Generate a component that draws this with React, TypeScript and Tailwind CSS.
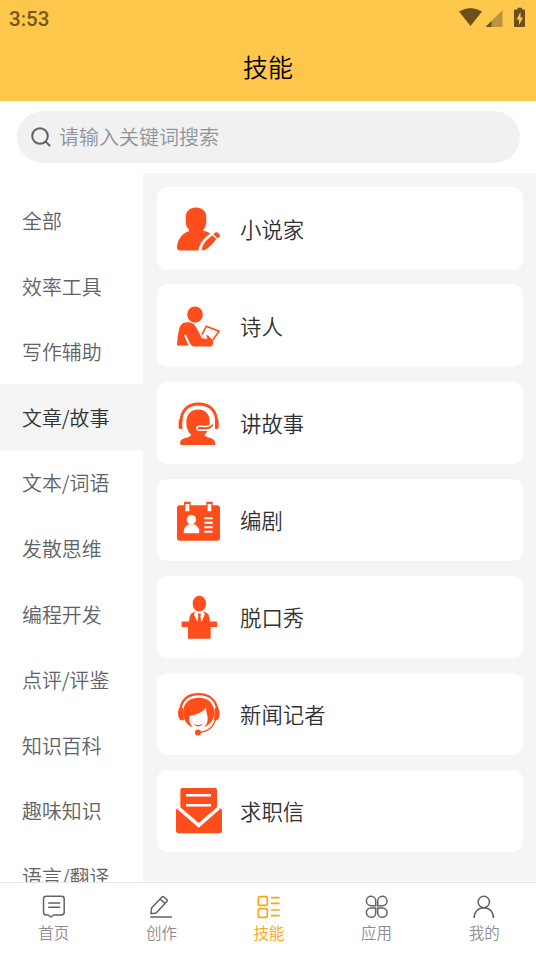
import type { ReactNode } from "react";

const ORANGE = "#ff4d1c";

function NovelistIcon() {
  return (
    <svg viewBox="75 73.5 144 144" className="size-12 shrink-0" fill={ORANGE}>
      <path d="M138 81c19 0 31 12 31 29v12c0 12-4 20-9 25v4c7 2 15 4 21 8-17 12-32 28-36 51H91c-7 0-11-4-10-11 2-24 17-42 36-47v-5c-6-6-10-13-10-25v-12c0-17 12-29 31-29z" />
      <path d="M155 210c1-14 7-24 18-34l14-12 12 12-13 15c-9 10-18 18-31 19zM190 161l5-4c4-3 8-1 11 2 4 3 5 7 3 10l-6 5z" />
    </svg>
  );
}

function PoetIcon() {
  return (
    <svg viewBox="75 64.3 144 144" className="size-12 shrink-0" fill={ORANGE}>
      <ellipse cx="135" cy="102" rx="23.5" ry="24.5" />
      <path d="M81 195c1-24 4-42 9-57 4-9 12-13 21-13 14 0 22 5 28 16l17 32c6 1 12 2 17 1l-5-9c4-3 8 0 10 4l11 11c2 7 0 17-8 18h-45c-8 0-12-3-15-8l-14-29-5 3 14 31z" />
      <path d="M156 162l13-25 38 15-18 26" fill="none" stroke={ORANGE} strokeWidth="5" />
      <path d="M178 174l10 7" stroke={ORANGE} strokeWidth="5" />
    </svg>
  );
}

function StorytellerIcon() {
  return (
    <svg viewBox="75 67.2 144 144" className="size-12 shrink-0" fill={ORANGE}>
      <path d="M93 134c1-33 21-52 53-52s53 19 54 52" fill="none" stroke={ORANGE} strokeWidth="9" />
      <path d="M89 128h8v29h-7c-3 0-4-2-4-5v-19c0-3 1-5 3-5zM195 128h8c2 0 3 2 3 5v19c0 3-2 5-5 5h-6z" />
      <path d="M144 99c22 0 35 14 35 34v10c-6 5-15 5-26 4-8-2-15 1-15 7 0 7 6 10 14 9h20c-2 5-5 8-9 12 4 5 10 7 18 9 10 3 15 9 15 18 0 2-2 3-4 3H95c-3 0-5-2-5-5 0-9 6-14 16-16 8-2 14-4 18-9-10-8-15-20-15-38 0-23 13-38 35-38z" />
      <path d="M187 142c-6 8-17 11-30 9h-7c-5 0-7 2-7 4s2 4 6 4h17c12-1 20-6 24-14z" />
    </svg>
  );
}

function ScreenwriterIcon() {
  return (
    <svg viewBox="75 64 144 144" className="size-12 shrink-0" fill={ORANGE}>
      <rect x="81" y="92" width="129" height="106" rx="8" />
      <path d="M102 81h20v29h-20zM169 81h19v29h-19z" />
      <g fill="#fff">
        <path d="M106 88h12v22h-12zM173 88h11v22h-11z" />
        <circle cx="124" cy="135" r="14" />
        <path d="M101 173c0-13 8-22 18-24h11c11 2 18 11 18 24 0 2-1 3-3 3h-41c-2 0-3-1-3-3z" />
        <path d="M163 128h25v6h-25zM163 141h25v6h-25zM163 155h25v6h-25zM163 168h25v6h-25z" />
      </g>
    </svg>
  );
}

function TalkShowIcon() {
  return (
    <svg viewBox="75 66.7 144 144" className="size-12 shrink-0" fill={ORANGE}>
      <ellipse cx="148" cy="98.500" rx="20" ry="23.500" />
      <path d="M134 123c-9 3-14 8-15 16l-2 13H95v17h19v35h68v-35h19v-17h-21l-2-13c-1-8-6-13-15-16z" />
      <path d="M135 122h26l3 9-9 22-7-10-6 10-10-22z" fill="#fff" />
      <path d="M145 128h6l2 5-2 3 2 11-5 9-5-9 2-11-2-3z" />
    </svg>
  );
}

function ReporterIcon() {
  return (
    <svg viewBox="75 69.5 144 144" className="size-12 shrink-0" fill={ORANGE}>
      <path d="M91 127c5-29 25-45 55-45s51 16 56 45" fill="none" stroke={ORANGE} strokeWidth="7" />
      <path d="M146 93c28 0 44 15 47 41 0 9-1 16-4 22-5 12-15 20-26 25 9-10 12-22 9-35-2-8-4-15-4-24-11 14-27 22-49 25-3 11 0 25 10 35-16-6-29-22-30-43 0-29 18-46 47-46z" />
      <path d="M94 122c-6 0-10 6-10 17 0 10 3 17 8 21h10l-3-36zM198 122c7 0 11 6 11 17 0 11-3 18-8 21h-9l2-36z" />
      <path d="M132 171c8 5 17 5 26 0-5 11-20 11-26 0z" />
      <path d="M198 153c-6 26-23 41-51 44" fill="none" stroke={ORANGE} strokeWidth="4" />
      <circle cx="144" cy="197" r="9" />
    </svg>
  );
}

function LetterIcon() {
  return (
    <svg viewBox="75 66.3 144 144" className="size-12 shrink-0" fill={ORANGE}>
      <path d="M91 75c0-4 2-6 6-6h98c4 0 6 2 6 6v52l-55 47-55-47z" />
      <path d="M85 130l61 57 62-57c5 0 8 3 8 8v59c0 5-3 8-8 8H86c-5 0-8-3-8-8v-59c0-5 2-8 7-8z" />
      <path d="M108 91h75M108 121h75" stroke="#fff" strokeWidth="8" />
      <path d="M85 130l61 53 61-53" fill="none" stroke="#fff" strokeWidth="8" />
    </svg>
  );
}

const categories = [
  "全部",
  "效率工具",
  "写作辅助",
  "文章/故事",
  "文本/词语",
  "发散思维",
  "编程开发",
  "点评/评鉴",
  "知识百科",
  "趣味知识",
  "语言/翻译",
];

const skills: { label: string; icon: ReactNode }[] = [
  { label: "小说家", icon: <NovelistIcon /> },
  { label: "诗人", icon: <PoetIcon /> },
  { label: "讲故事", icon: <StorytellerIcon /> },
  { label: "编剧", icon: <ScreenwriterIcon /> },
  { label: "脱口秀", icon: <TalkShowIcon /> },
  { label: "新闻记者", icon: <ReporterIcon /> },
  { label: "求职信", icon: <LetterIcon /> },
];

const navIcon = "size-6";

const tabs: { label: string; active?: boolean; icon: ReactNode }[] = [
  {
    label: "首页",
    icon: (
      <svg viewBox="125.4 105 72 72" className={navIcon} fill="none" stroke="#606266" strokeWidth="4.500" strokeLinejoin="round">
        <path d="M138 109h46q8 0 8 8v40q0 8-8 8h-24l-8 6-8-6h-6q-8 0-8-8v-40q0-8 8-8zM144 129h36M144 142h36" />
      </svg>
    ),
  },
  {
    label: "创作",
    icon: (
      <svg viewBox="448.200 105 72 72" className={navIcon} fill="none" stroke="#606266" strokeWidth="4.500" strokeLinejoin="round">
        <path d="M454 161l2-17 31-33q3-3 6 0l8 7q4 3 1 6l-32 35zM481 117l15 13M452 171h65" />
      </svg>
    ),
  },
  {
    label: "技能",
    active: true,
    icon: (
      <svg viewBox="771 105 72 72" className={navIcon} fill="none" stroke="#fba414" strokeWidth="5">
        <rect x="775" y="110" width="27" height="26" rx="5" />
        <rect x="775" y="146" width="27" height="26" rx="5" />
        <path d="M813 113h26M813 130h26M813 150h26M813 167h26" />
      </svg>
    ),
  },
  {
    label: "应用",
    icon: (
      <svg viewBox="295.800 165 72 72" className={navIcon} fill="none" stroke="#606266" strokeWidth="4.500">
        <path d="M328 197h-15a14 14 0 1 1 15-14zM334 197h15a14 14 0 1 0-15-14zM328 204h-15a14 14 0 1 0 15 14zM334 204h15a14 14 0 1 1-15 14z" />
      </svg>
    ),
  },
  {
    label: "我的",
    icon: (
      <svg viewBox="618.600 165 72 72" className={navIcon} fill="none" stroke="#606266" strokeWidth="4.500">
        <circle cx="654" cy="186" r="17" />
        <path d="M625 234c0-19 12-31 29-31s29 12 29 31" />
      </svg>
    ),
  },
];

export default function App() {
  return (
    <div className="flex h-[954px] w-[536px] flex-col overflow-hidden bg-white font-['Noto_Sans_CJK_SC',sans-serif] font-[350]">
      <header className="h-[101px] shrink-0 bg-[#ffc84c]">
        <div className="flex h-9 items-center justify-between pr-[10px] pl-[9px]">
          <span className="pt-[2px] font-['Roboto',sans-serif] text-[20.500px] font-medium text-[#755717]">3:53</span>
          <svg viewBox="0 0 67 22" className="h-[22px] w-[67px]" fill="#6b501b">
            <path d="M0 4.500Q11.500-2.500 23 4.500L11.500 19z" />
            <path d="M43.500 3v17h-17z" fill="#bd943b" />
            <path d="M32.500 14v6h-6z" />
            <path fillRule="evenodd" d="M58.500.800h4.500v1.700h2q1 0 1 1v15.500q0 1-1 1h-9q-1 0-1-1V3.500q0-1 1-1h2.500zM61.500 5l-4 7.500h2.500V18l4-7.500h-2.500z" />
          </svg>
        </div>
        <h1 className="text-center text-[25px] leading-[61px] font-[350] text-black">技能</h1>
      </header>

      <div className="h-[72px] shrink-0 pt-[10px] pr-4 pl-[17px]">
        <div className="flex h-[52px] items-center rounded-full bg-[#f1f1f1] pl-[14px]">
          <svg viewBox="0 0 20 20" className="size-5" fill="none" stroke="#606266" strokeWidth="2">
            <circle cx="9" cy="9" r="7.800" />
            <path d="M14.500 14.500l4.500 4.500" />
          </svg>
          <span className="ml-2 pb-px text-[20px] text-[#909399]">请输入关键词搜索</span>
        </div>
      </div>

      <main className="flex min-h-0 flex-1 bg-[#f5f5f5]">
        <aside className="w-[143px] shrink-0 overflow-hidden bg-white pt-[14.200px]">
          {categories.map((name) => (
            <div
              key={name}
              className={
                name === "文章/故事"
                  ? "flex h-[65.600px] items-center bg-[#f5f5f5] pt-[2px] pl-[22px] text-[19.900px] text-[#303133]"
                  : "flex h-[65.600px] items-center pt-[2px] pl-[22px] text-[19.900px] text-[#606266]"
              }
            >
              {name}
            </div>
          ))}
        </aside>
        <section className="flex flex-1 flex-col gap-[14.520px] overflow-hidden pt-[14.480px] pr-[13px] pl-[14px]">
          {skills.map((skill) => (
            <div key={skill.label} className="flex h-[82.500px] shrink-0 items-center rounded-[10px] bg-white pl-[18px]">
              {skill.icon}
              <span className="ml-[17px] text-[21.400px] text-[#303133]">{skill.label}</span>
            </div>
          ))}
        </section>
      </main>

      <nav className="flex h-[72px] shrink-0 border-t border-[#e4e7e4] bg-white">
        {tabs.map((tab) => (
          <div key={tab.label} className="flex w-[107.600px] shrink-0 flex-col items-center pt-3">
            {tab.icon}
            <span
              className={
                tab.active
                  ? "mt-[2px] text-[15.500px] leading-[22px] text-[#fba414]"
                  : "mt-[2px] text-[15.500px] leading-[22px] text-[#8c8d90]"
              }
            >
              {tab.label}
            </span>
          </div>
        ))}
      </nav>
    </div>
  );
}
